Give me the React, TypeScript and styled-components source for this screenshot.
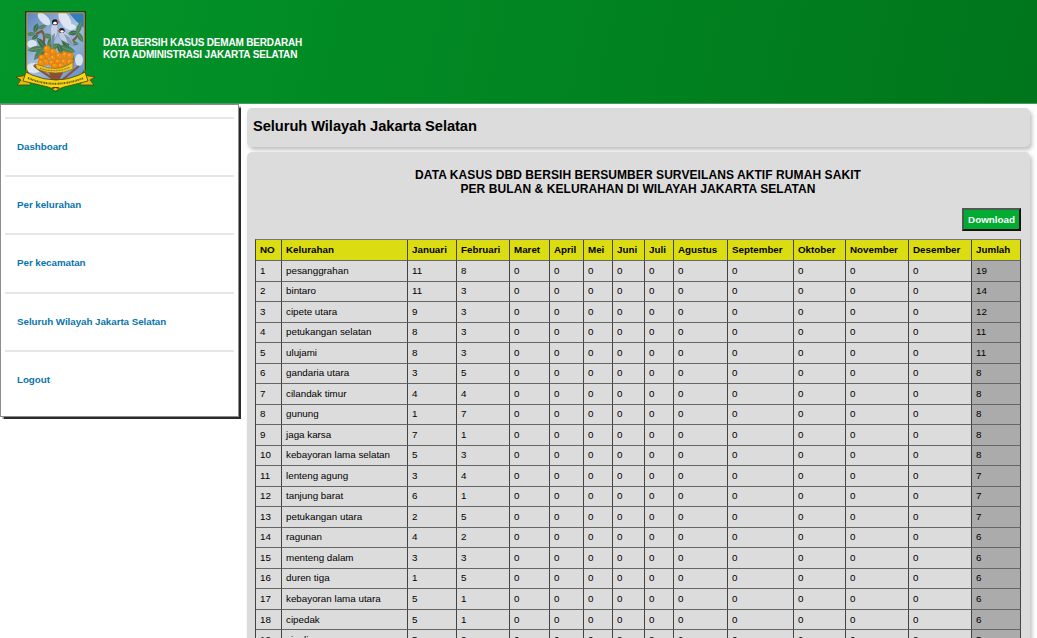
import React from "react";
import styled, { createGlobalStyle } from "styled-components";

const GlobalStyle = createGlobalStyle`
  * { box-sizing: border-box; }
  body {
    margin: 0;
    background: #fff;
    color: #000;
    font-family: "Liberation Sans", Arial, sans-serif;
  }
`;

const Page = styled.div`
  height: 638px;
  overflow: hidden;
`;

const Header = styled.header`
  display: flex;
  height: 104px;
  padding-left: 14px;
  background: linear-gradient(103deg, #029529 0%, #00751b 100%);
  border-bottom: 1px solid #4b9a5c;
`;

const HeaderTitle = styled.h1`
  margin: 37px 0 0 6px;
  color: #fff;
  font-size: 10px;
  line-height: 12px;
  font-weight: bold;
  white-space: nowrap;
`;

const TitleLine = styled.span<{ $spacing: number }>`
  display: block;
  letter-spacing: ${(p) => p.$spacing}px;
`;

const Body = styled.div`
  display: flex;
  align-items: flex-start;
`;

const Sidebar = styled.nav`
  width: 239px;
  height: 313px;
  flex: none;
  padding: 12px 4px 0;
  border: 1px solid #8d8d8d;
  box-shadow: 1.5px 1.5px 1px #2a2a2a;
  background: #fff;
`;

const MenuItem = styled.a`
  display: flex;
  align-items: center;
  height: 58.2px;
  padding: 0 0 1px 12px;
  border-top: 2px solid #e6e6e6;
  color: #0a75ad;
  font-size: 9.8px;
  letter-spacing: -0.05px;
  font-weight: bold;
`;

const Main = styled.main`
  display: flex;
  flex-direction: column;
  gap: 5px;
  width: 783px;
  margin: 4px 0 0 8px;
`;

const Panel = styled.section`
  border-radius: 5px;
  background: #dcdcdc;
  box-shadow: 2px 3px 4px rgba(0, 0, 0, 0.25);
`;

const HeadingPanel = styled(Panel)`
  height: 39px;
  height: 38.5px;
`;

const Heading = styled.h2`
  margin: 0;
  padding: 9px 0 0 6px;
  font-size: 14.7px;
  letter-spacing: -0.07px;
  line-height: 18px;
`;

const ReportPanel = styled(Panel)`
  display: flex;
  flex-direction: column;
  height: 520px;
  margin-top: 0.5px;
  padding: 16px 9px 0 8px;
`;

const ReportTitle = styled.h3`
  margin: 0;
  font-size: 12px;
  line-height: 14px;
  text-align: center;
  font-weight: bold;
`;

const DownloadButton = styled.button`
  align-self: flex-end;
  width: 59px;
  height: 23px;
  margin: 12px 0 8px;
  padding: 0;
  border: 2px solid;
  border-color: #4c5a50 #111 #111 #4c5a50;
  background: #02ab31;
  color: #fff;
  font: bold 9.8px "Liberation Sans", Arial, sans-serif;
`;

const Table = styled.div`
  flex: none;
  border-left: 1px solid #444;
  border-top: 1px solid #777;
`;

const Row = styled.div<{ $head?: boolean }>`
  display: grid;
  grid-template-columns: 26px 126px 49px 53px 40px 34px 29px 32px 29px 54px 66px 52px 63px 63px 49px;
  height: ${(p) => (p.$head ? 21 : 20.53)}px;
  background: ${(p) => (p.$head ? "#dcdc13" : "transparent")};
  font-weight: ${(p) => (p.$head ? "bold" : "normal")};
`;

const Cell = styled.div<{ $total?: boolean }>`
  display: flex;
  align-items: center;
  padding: 0 0 1px 4px;
  border-right: 1px solid #444;
  border-bottom: 1px solid #666;
  background: ${(p) => (p.$total ? "#ababab" : "transparent")};
  font-size: 9.8px;
  white-space: nowrap;
`;

const LogoSvg = styled.svg`
  width: 83px;
  height: 88px;
  margin-top: 8px;
  flex: none;
`;

const menu = ["Dashboard", "Per kelurahan", "Per kecamatan", "Seluruh Wilayah Jakarta Selatan", "Logout"];

const columns = [
  "NO", "Kelurahan", "Januari", "Februari", "Maret", "April", "Mei", "Juni",
  "Juli", "Agustus", "September", "Oktober", "November", "Desember", "Jumlah",
];

const data: [string, number, number][] = [
  ["pesanggrahan", 11, 8],
  ["bintaro", 11, 3],
  ["cipete utara", 9, 3],
  ["petukangan selatan", 8, 3],
  ["ulujami", 8, 3],
  ["gandaria utara", 3, 5],
  ["cilandak timur", 4, 4],
  ["gunung", 1, 7],
  ["jaga karsa", 7, 1],
  ["kebayoran lama selatan", 5, 3],
  ["lenteng agung", 3, 4],
  ["tanjung barat", 6, 1],
  ["petukangan utara", 2, 5],
  ["ragunan", 4, 2],
  ["menteng dalam", 3, 3],
  ["duren tiga", 1, 5],
  ["kebayoran lama utara", 5, 1],
  ["cipedak", 5, 1],
  ["cipulir", 5, 0],
];

/* x, y, half length, rotation, half width */
const leaves: [number, number, number, number, number][] = [
  [22, 20, 5, -70, 2.5], [28, 19, 5, -20, 2], [17, 26, 5, -5, 2], [21, 29, 4, -35, 2],
  [22, 41, 9, -8, 3], [25, 46, 8, -50, 3], [28, 36, 8, 50, 3], [37, 33, 8, -65, 3],
  [39, 39, 8, -20, 3], [31, 47, 7, -85, 3], [34, 28, 5, 15, 2.5],
  [53, 41, 9, 20, 3.5], [51, 34, 7, 55, 3], [57, 48, 7, 60, 2.5], [59, 35, 6, 10, 2.5],
  [59, 25, 5, -10, 2.5], [65, 20, 7, -70, 2.5], [66, 29, 6, 60, 2.5], [46, 41, 6, 70, 2.5], [30, 42, 5, -20, 3],
];

const fruits: [number, number][] = [
  [33, 41], [39, 44], [33, 47], [28, 50], [39, 50], [45, 48], [51, 47], [56, 48],
  [32, 54], [38, 55], [44, 54], [50, 54], [56, 54], [27, 55], [47, 58], [41, 58],
];

const Logo = () => (
  <LogoSvg viewBox="0 0 83 88">
    <defs>
      <linearGradient id="sky" x1="0" y1="0" x2="0.8" y2="1">
        <stop offset="0" stopColor="#5a83bd" />
        <stop offset=".5" stopColor="#a9c0e0" />
        <stop offset="1" stopColor="#5f8fca" />
      </linearGradient>
      <clipPath id="shield">
        <path d="M13 5H70V60Q68 68 59 73L42 79L25 73Q14 69 13 60Z" />
      </clipPath>
    </defs>
    <path d="M12 4H71V61Q69 68 60 74L42 80L24 74Q14 69 12 61Z" fill="url(#sky)" stroke="#2b291d" strokeWidth="1.6" />
    <g clipPath="url(#shield)">
      <path d="M55 5H70V20Q62 14 55 5Z" fill="#347dba" />
      <g fill="#e9eef5" opacity=".85">
        <ellipse cx="30" cy="11" rx="8" ry="4" transform="rotate(45 30 11)" />
        <ellipse cx="51" cy="12" rx="10" ry="5" transform="rotate(60 51 12)" />
        <ellipse cx="18" cy="36" rx="5" ry="4" />
        <ellipse cx="57" cy="19" rx="5" ry="3" />
        <ellipse cx="20" cy="60" rx="8" ry="5" />
        <ellipse cx="65" cy="52" rx="4" ry="6" />
      </g>
      <path d="M42 79C41 67 26 65 20 57M43 76Q57 65 65 58M42 78Q45 67 42 60M27 41Q33 30 28 23L22 26M49 37Q59 36 65 25" fill="none" stroke="#83543f" strokeWidth="2.2" />
      <path d="M34 63H50L43 76H40Z" fill="#8a5037" />
      {leaves.map(([x, y, r, a, w], i) => (
        <g key={i} transform={`translate(${x} ${y}) rotate(${a})`}>
          <path d={`M${-r} 0Q0 ${-w * 2} ${r} 0Q0 ${w * 2} ${-r} 0Z`} fill={i % 3 ? "#4b8058" : "#3a6c48"} />
          <path d={`M${-r + 1} 0H${r - 1}`} stroke="#7fa383" strokeWidth=".5" />
        </g>
      ))}
      <path d="M38 42L37 27Q35 20 39 15H43Q45 21 43 27L39 34Z" fill="#c4d0e5" stroke="#6d7b91" strokeWidth=".4" />
      <path d="M38 41L38 28L41 25L40 35Z" fill="#778ba8" />
      <ellipse cx="41" cy="14.3" rx="3" ry="3" fill="#161c24" />
      <ellipse cx="41" cy="15.2" rx="1.8" ry="1.4" fill="#fff" />
      <path d="M42.8 13.7h2.6" stroke="#d94e3f" strokeWidth="1.4" />
      <path d="M45 25Q46 21 51 23Q58 28 60 38L55 36L47 32Q44 29 45 25Z" fill="#c2cde2" stroke="#6d7b91" strokeWidth=".4" />
      <path d="M50 26Q56 27 60 38L54 35Z" fill="#879dbc" />
      <ellipse cx="47.8" cy="22.5" rx="2.8" ry="2.6" fill="#161c24" />
      <ellipse cx="48" cy="23.5" rx="1.8" ry="1.2" fill="#fff" />
      <path d="M43.8 22.7h2.6" stroke="#d94e3f" strokeWidth="1.4" />
      {fruits.map(([x, y], i) => (
        <g key={i}>
          <circle cx={x} cy={y} r="3.4" fill="#ed8d12" stroke="#c46c12" strokeWidth=".35" />
          <circle cx={x - 0.8} cy={y - 1} r="1" fill="#ffad35" />
        </g>
      ))}
    </g>
    <path d="M12.8 64V4.8H70.2V64" fill="none" stroke="#cda331" strokeWidth=".9" />
    <path d="M21 56L25 57Q42 64 54 57L59 54V61Q42 69 23 61Z" fill="#f3c824" stroke="#80651c" strokeWidth=".7" />
    <path d="M26 60.2Q42 65.5 56 59.2" fill="none" stroke="#755d19" strokeWidth="1.4" strokeDasharray="1 .6" opacity=".75" />
    <path d="M14 67L2 69L7 72L3 77L16 77M69 67L81 69L76 72L80 77L67 77" fill="#e7b90f" stroke="#4e430f" strokeWidth=".8" />
    <path d="M12 64L18 67Q30 72 42 72Q54 72 65 67L71 64L74 73Q62 76 50 79L42 82L34 79Q22 76 9 73Z" fill="#f7d616" stroke="#5b4b0a" strokeWidth=".9" />
    <path d="M14 70Q28 76 42 75.7Q56 75.5 69.5 70" fill="none" stroke="#3d370c" strokeWidth="2" strokeDasharray="1.2 .7 .6 .5 1 .6" opacity=".8" />
    <path d="M37 79L46 79L42 81Z" fill="#4a3b0c" />
    <ellipse cx="41.5" cy="81.3" rx="2.8" ry="1.8" fill="#e5bc18" stroke="#3e3912" strokeWidth=".9" />
  </LogoSvg>
);

export default function App() {
  return (
    <Page>
      <GlobalStyle />
      <Header>
        <Logo />
        <HeaderTitle>
          <TitleLine $spacing={-0.18}>DATA BERSIH KASUS DEMAM BERDARAH</TitleLine>
          <TitleLine $spacing={-0.17}>KOTA ADMINISTRASI JAKARTA SELATAN</TitleLine>
        </HeaderTitle>
      </Header>
      <Body>
        <Sidebar>
          {menu.map((item) => (
            <MenuItem key={item}>{item}</MenuItem>
          ))}
        </Sidebar>
        <Main>
          <HeadingPanel>
            <Heading>Seluruh Wilayah Jakarta Selatan</Heading>
          </HeadingPanel>
          <ReportPanel>
            <ReportTitle>
              <TitleLine $spacing={0.08}>DATA KASUS DBD BERSIH BERSUMBER SURVEILANS AKTIF RUMAH SAKIT</TitleLine>
              <TitleLine $spacing={0.08}>PER BULAN &amp; KELURAHAN DI WILAYAH JAKARTA SELATAN</TitleLine>
            </ReportTitle>
            <DownloadButton>Download</DownloadButton>
            <Table>
              <Row $head>
                {columns.map((c) => (
                  <Cell key={c}>{c}</Cell>
                ))}
              </Row>
              {data.map(([name, jan, feb], i) => (
                <Row key={name}>
                  {[i + 1, name, jan, feb, 0, 0, 0, 0, 0, 0, 0, 0, 0, 0].map((v, j) => (
                    <Cell key={j}>{v}</Cell>
                  ))}
                  <Cell $total>{jan + feb}</Cell>
                </Row>
              ))}
            </Table>
          </ReportPanel>
        </Main>
      </Body>
    </Page>
  );
}
